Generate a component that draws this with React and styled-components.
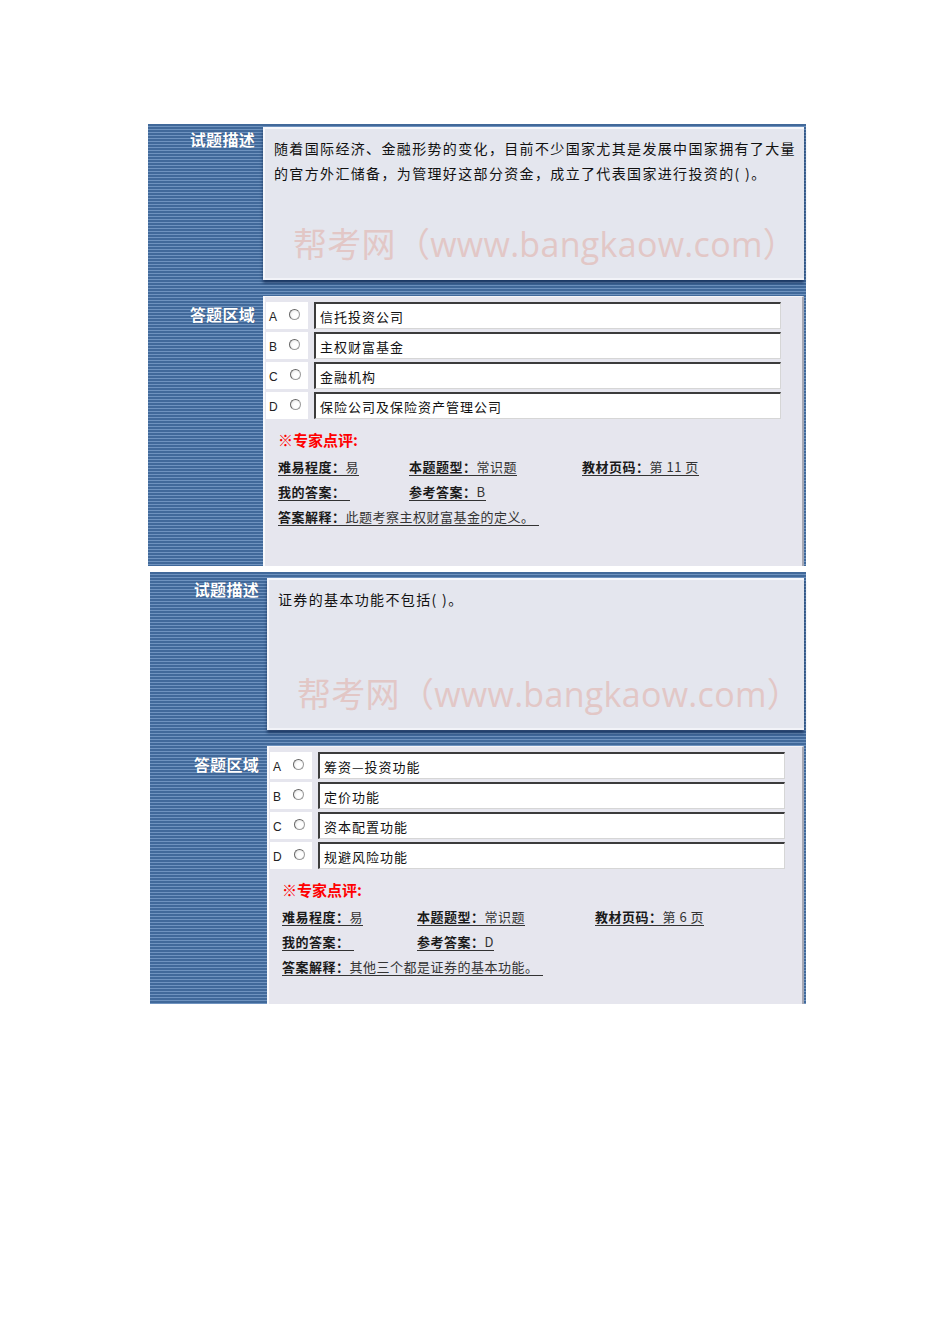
import React from "react";
import styled, { createGlobalStyle } from "styled-components";

const GlobalStyle = createGlobalStyle`
  body {
    margin: 0;
    background: #ffffff;
    font-family: "Liberation Sans", "Noto Sans CJK SC", sans-serif;
  }
`;

const Page = styled.div`
  padding: 124px 0 0 148px;
  display: flex;
  flex-direction: column;
  gap: 6px;
  min-height: 1344px;
  box-sizing: border-box;
`;

const Block = styled.section`
  margin-left: ${(p) => p.$shift}px;
  width: ${(p) => p.$w}px;
  box-sizing: border-box;
  padding: ${(p) => p.$top}px 2px 0 0;
  display: flex;
  flex-direction: column;
  gap: 16px;
  background: repeating-linear-gradient(
    to bottom,
    #41699a 0px,
    #41699a 2px,
    #6f93bf 2px,
    #6f93bf 3px
  );
`;

const Section = styled.div`
  display: flex;
  height: ${(p) => p.$h}px;
`;

const SideLabel = styled.div`
  width: ${(p) => p.$w}px;
  flex-shrink: 0;
  box-sizing: border-box;
  padding: ${(p) => p.$top}px 8px 0 0;
  text-align: right;
  color: #ffffff;
  font-family: "Noto Sans CJK SC", sans-serif;
  font-weight: 700;
  font-size: 16px;
  line-height: 16px;
  letter-spacing: 0.3px;
  text-shadow: 0 0 1px rgba(20, 40, 80, 0.6);
`;

const DescPanel = styled.div`
  flex: 1;
  min-width: 0;
  overflow: hidden;
  display: flex;
  flex-direction: column;
  justify-content: space-between;
  background: #e4e6ee;
  border-top: 2px solid #f6f7fb;
  border-left: 2px solid #f6f7fb;
  border-bottom: 2px solid #f2f3f8;
  box-shadow: 0 3px 3px rgba(16, 40, 80, 0.75);
  padding: 7px 4px 14px 9px;
`;

const Question = styled.p`
  margin: 0;
  font-family: "Noto Sans CJK SC", sans-serif;
  font-size: 14px;
  line-height: 25px;
  letter-spacing: 1.35px;
  color: #111111;
`;

const Watermark = styled.div`
  padding-left: 19px;
  font-family: "Open Sans", "Noto Sans CJK SC", sans-serif;
  font-size: 34px;
  line-height: 40px;
  letter-spacing: 0.3px;
  color: #e2c7c6;
  white-space: nowrap;
`;

const AnswerPanel = styled.div`
  flex: 1;
  min-width: 0;
  background: #e6e6ee;
  border-left: 2px solid #fafafc;
  border-top: 1px solid #f4f4f8;
  border-right: 2px solid #a6a8b4;
  padding: 5px 0 0 1px;
  box-sizing: border-box;
`;

const Options = styled.div`
  width: 515px;
  display: flex;
  flex-direction: column;
  gap: 3px;
`;

const OptionRow = styled.div`
  display: flex;
  height: 27px;
`;

const OptionKey = styled.div`
  width: 42px;
  background: #ffffff;
  display: flex;
  align-items: center;
  padding: 3px 0 0 3px;
  box-sizing: border-box;
  font-size: 12px;
  color: #222222;
  gap: 12px;
  margin-right: 6px;
`;

const Radio = styled.span`
  width: 11px;
  height: 11px;
  border-radius: 50%;
  box-sizing: border-box;
  border: 1px solid #9a9a9a;
  border-top-color: #666666;
  border-left-color: #666666;
  background: radial-gradient(circle at 60% 60%, #ffffff 35%, #dcdcdc 100%);
  margin-top: -5px;
`;

const OptionBox = styled.div`
  flex: 1;
  background: #ffffff;
  border-top: 2px solid #3c3c3c;
  border-left: 2px solid #3c3c3c;
  border-right: 1px solid #d6d6d6;
  border-bottom: 1px solid #d6d6d6;
  display: flex;
  align-items: center;
  padding-left: 4px;
  font-family: "Noto Sans CJK SC", sans-serif;
  font-size: 13px;
  letter-spacing: 1px;
  color: #111111;
`;

const Review = styled.div`
  padding: 12px 0 0 ${(p) => p.$left}px;
`;

const ReviewTitle = styled.div`
  font-family: "Noto Sans CJK SC", sans-serif;
  font-weight: 700;
  font-size: 15px;
  line-height: 18px;
  color: #ff0000;
  margin-bottom: 6px;
`;

const MetaRow = styled.div`
  display: grid;
  grid-template-columns: ${(p) => p.$cols};
  height: 25px;
  align-items: center;
`;

const Meta = styled.span`
  justify-self: start;
  font-family: "Noto Sans CJK SC", sans-serif;
  font-size: 13px;
  line-height: 16px;
  letter-spacing: 0.5px;
  color: #333333;
  border-bottom: 1px solid #333333;
  padding-right: ${(p) => p.$tail || 0}px;
`;

const MetaKey = styled.b`
  font-weight: 700;
  color: #1a1a1a;
`;

const questions = [
  {
    shift: 0,
    width: 658,
    top: 3,
    labelW: 115,
    descH: 153,
    ansH: 270,
    descLabelTop: 4,
    cols: "131px 173px auto",
    text:
      "随着国际经济、金融形势的变化，目前不少国家尤其是发展中国家拥有了大量的官方外汇储备，为管理好这部分资金，成立了代表国家进行投资的( )。",
    options: ["信托投资公司", "主权财富基金", "金融机构", "保险公司及保险资产管理公司"],
    page: "11",
    answer: "B",
    explain: "此题考察主权财富基金的定义。",
  },
  {
    shift: 2,
    width: 656,
    top: 6,
    labelW: 117,
    descH: 152,
    ansH: 258,
    descLabelTop: 3,
    cols: "135px 178px auto",
    text: "证券的基本功能不包括( )。",
    options: ["筹资—投资功能", "定价功能", "资本配置功能", "规避风险功能"],
    page: "6",
    answer: "D",
    explain: "其他三个都是证券的基本功能。",
  },
];

function QuestionBlock({ q }) {
  return (
    <Block $shift={q.shift} $w={q.width} $top={q.top}>
      <Section $h={q.descH}>
        <SideLabel $w={q.labelW} $top={q.descLabelTop}>
          试题描述
        </SideLabel>
        <DescPanel>
          <Question>{q.text}</Question>
          <Watermark>帮考网（www.bangkaow.com）</Watermark>
        </DescPanel>
      </Section>
      <Section $h={q.ansH}>
        <SideLabel $w={q.labelW} $top={10}>
          答题区域
        </SideLabel>
        <AnswerPanel>
          <Options>
            {q.options.map((opt, i) => (
              <OptionRow key={opt}>
                <OptionKey>
                  {"ABCD"[i]}
                  <Radio />
                </OptionKey>
                <OptionBox>{opt}</OptionBox>
              </OptionRow>
            ))}
          </Options>
          <Review $left={12}>
            <ReviewTitle>※专家点评:</ReviewTitle>
            <MetaRow $cols={q.cols}>
              <Meta>
                <MetaKey>难易程度：</MetaKey>易
              </Meta>
              <Meta>
                <MetaKey>本题题型：</MetaKey>常识题
              </Meta>
              <Meta>
                <MetaKey>教材页码：</MetaKey>第 {q.page} 页
              </Meta>
            </MetaRow>
            <MetaRow $cols={q.cols}>
              <Meta $tail={4}>
                <MetaKey>我的答案：</MetaKey>
              </Meta>
              <Meta>
                <MetaKey>参考答案：</MetaKey>
                {q.answer}
              </Meta>
            </MetaRow>
            <MetaRow $cols="auto">
              <Meta $tail={4}>
                <MetaKey>答案解释：</MetaKey>
                {q.explain}
              </Meta>
            </MetaRow>
          </Review>
        </AnswerPanel>
      </Section>
    </Block>
  );
}

export default function App() {
  return (
    <>
      <GlobalStyle />
      <Page>
        {questions.map((q) => (
          <QuestionBlock key={q.page} q={q} />
        ))}
      </Page>
    </>
  );
}
